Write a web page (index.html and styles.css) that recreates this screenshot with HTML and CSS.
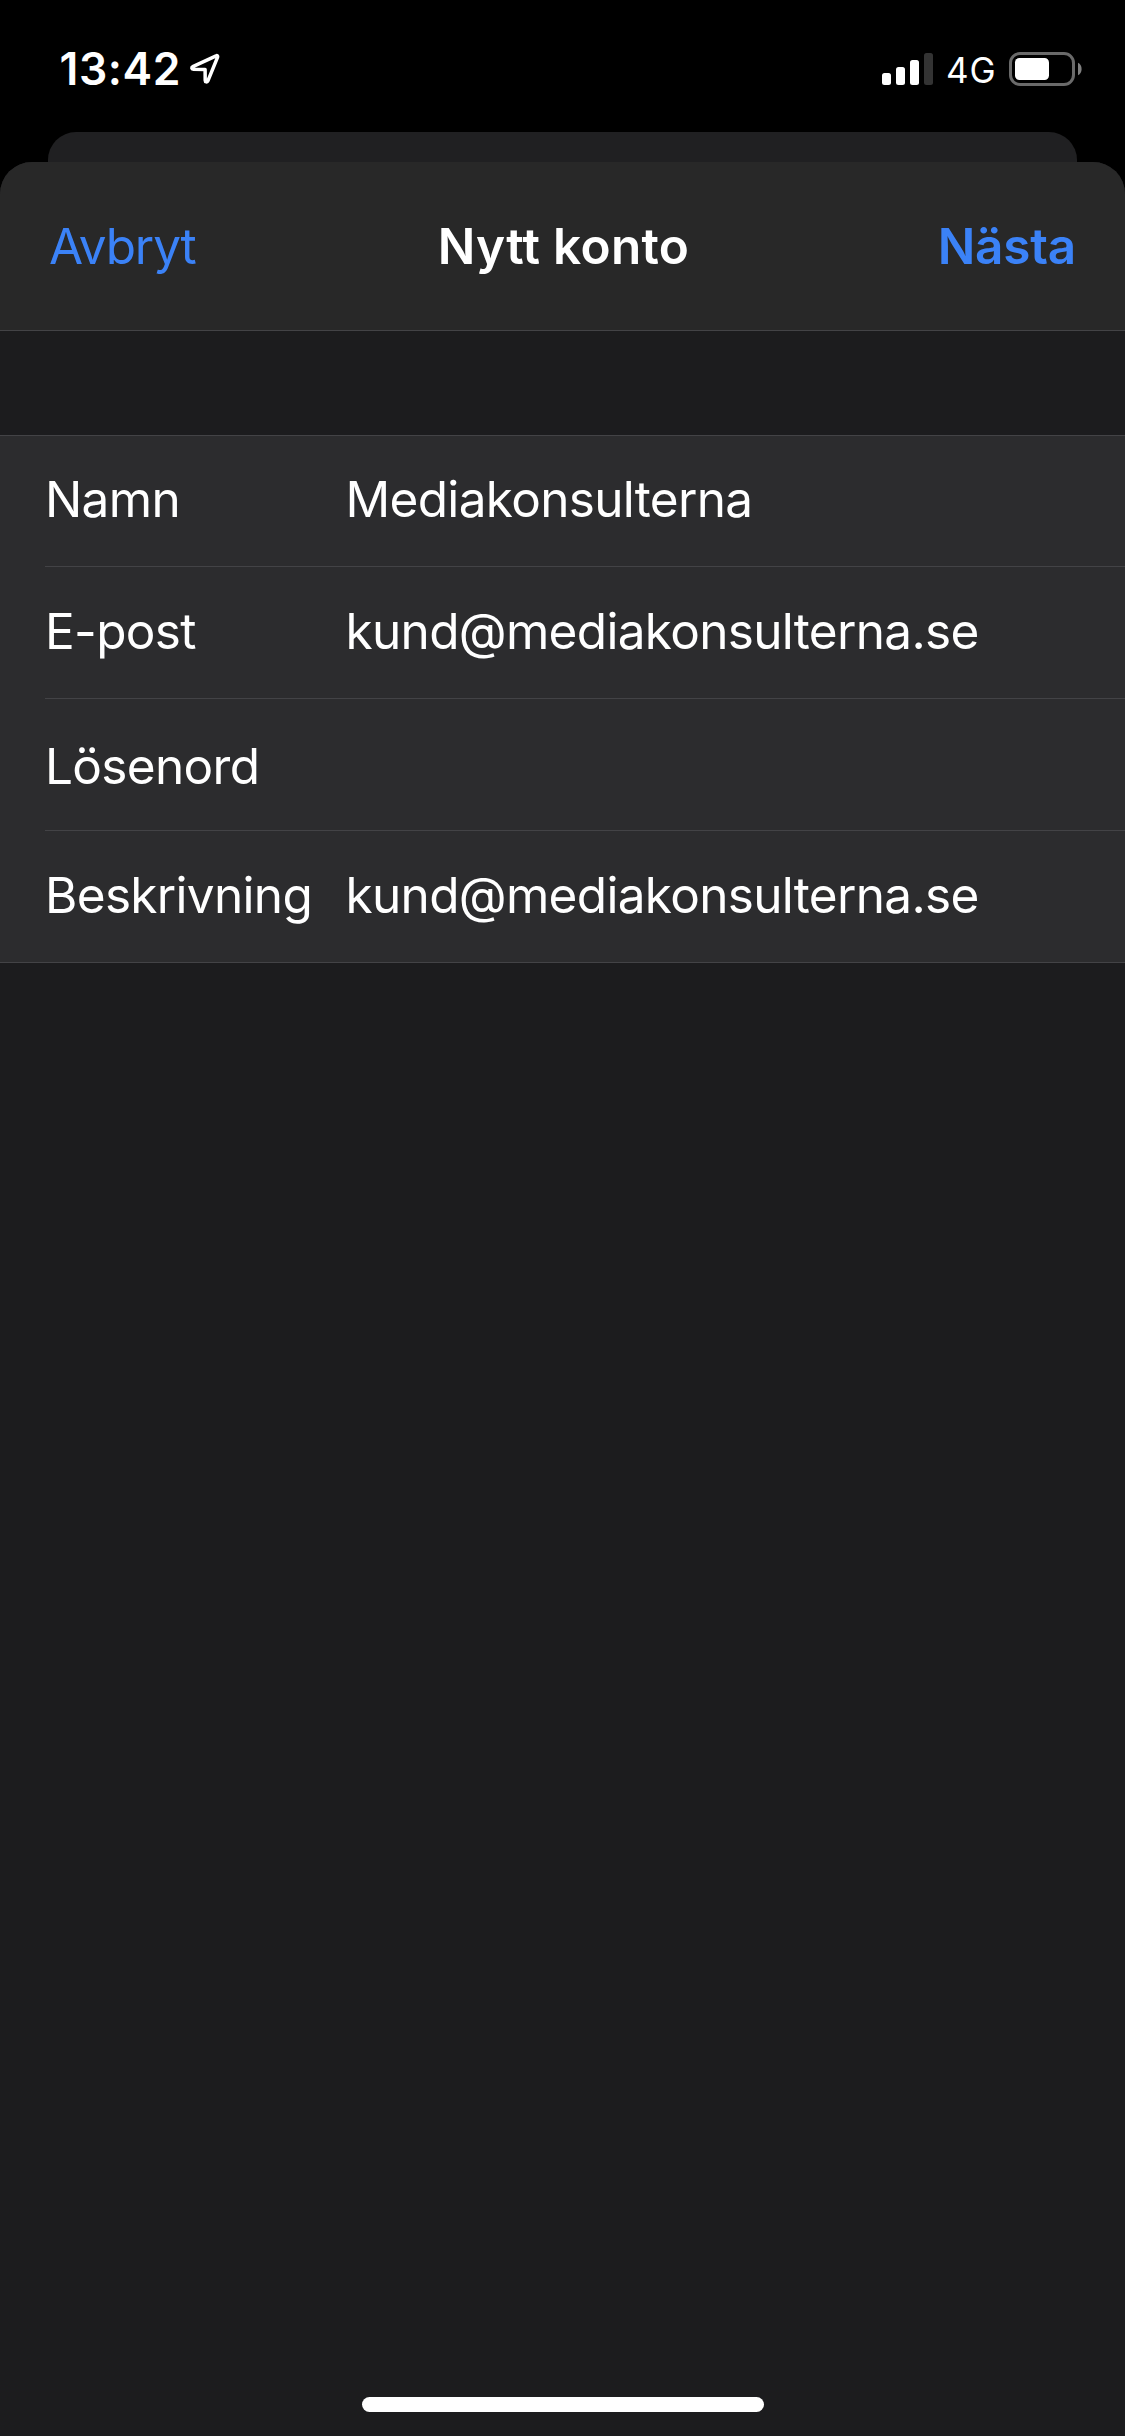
FILE: index.html
```
<!DOCTYPE html>
<html lang="sv">
<head>
    <meta charset="UTF-8">
    <meta name="viewport" content="width=device-width, initial-scale=1.0">
    <title>Nytt konto</title>
    <link rel="stylesheet" href="styles.css">
</head>
<body>
    <div class="status-bar">
        <div class="status-left">
            <span class="time">13:42</span>
            <svg class="location" width="34" height="34" viewBox="0 0 34 34">
                <path d="M29.8 5.3 C30.8 4.8 31.7 5.6 31.3 6.7 L21.6 30.4 C20.9 32 18.9 31.6 18.9 29.9 L18.8 19 L7.1 18.7 C5.2 18.6 5 16.9 6.5 16.2 Z" transform="translate(-1.7 -.5)" fill="none" stroke="#fff" stroke-width="3.5" stroke-linejoin="round"/>
            </svg>
        </div>
        <div class="status-right">
            <svg class="signal" width="51" height="32" viewBox="0 0 51 32">
                <rect x="0" y="20" width="9" height="12" rx="2.5" fill="#fff"/>
                <rect x="14" y="14" width="9" height="18" rx="2.5" fill="#fff"/>
                <rect x="28" y="7" width="9" height="25" rx="2.5" fill="#fff"/>
                <rect x="42" y="0" width="9" height="32" rx="2.5" fill="#333"/>
            </svg>
            <span class="network">4G</span>
            <svg class="battery" width="73" height="34" viewBox="0 0 73 34">
                <rect x="1.5" y="1.5" width="63" height="31" rx="9.5" fill="none" stroke="#6a6a6a" stroke-width="3"/>
                <rect x="6" y="6" width="34" height="22" rx="4.5" fill="#fff"/>
                <path d="M69 10.7 C73.8 12.7 73.8 21.3 69 23.3 Z" fill="#808080"/>
            </svg>
        </div>
    </div>

    <div class="back-sheet"></div>

    <div class="sheet">
        <div class="nav">
            <a class="cancel">Avbryt</a>
            <h1>Nytt konto</h1>
            <a class="next">Nästa</a>
        </div>

        <div class="form">
            <div class="row">
                <div class="label">Namn</div>
                <div class="value">Mediakonsulterna</div>
            </div>
            <div class="row">
                <div class="label">E-post</div>
                <div class="value email">kund@mediakonsulterna.se</div>
            </div>
            <div class="row password">
                <div class="label">Lösenord</div>
                <div class="value"></div>
            </div>
            <div class="row">
                <div class="label">Beskrivning</div>
                <div class="value email">kund@mediakonsulterna.se</div>
            </div>
        </div>

        <div class="home-indicator"></div>
    </div>
</body>
</html>
```
FILE: styles.css
```
* {
    box-sizing: border-box;
}
body {
    margin: 0;
    width: 1125px;
    height: 2436px;
    display: flex;
    flex-direction: column;
    overflow: hidden;
    background: #000;
    color: #fff;
    font-family: Inter, "Liberation Sans", sans-serif;
    font-size: 49.5px;
}
.status-bar {
    height: 132px;
    display: flex;
    justify-content: space-between;
    align-items: flex-start;
    padding: 49px 43px 0 59.5px;
}
.status-left,
.status-right {
    display: flex;
    align-items: flex-start;
}
.time {
    font-size: 44.5px;
    font-weight: 600;
    line-height: 40px;
    letter-spacing: 0.6px;
}
.location {
    margin-left: 7px;
    margin-top: 2px;
}
.signal {
    margin-top: 4px;
}
.network {
    font-size: 35px;
    line-height: 42px;
    letter-spacing: 0.8px;
    margin-left: 13px;
    width: 63px;
}
.battery {
    margin-top: 3px;
}
.back-sheet {
    height: 30px;
    flex-shrink: 0;
    margin: 0 48px;
    background: #202022;
    border-radius: 28px 28px 0 0;
}
.sheet {
    flex: 1;
    display: flex;
    flex-direction: column;
    background: #1c1c1e;
    border-radius: 32px 32px 0 0;
    overflow: hidden;
}
.nav {
    height: 169px;
    display: grid;
    grid-template-columns: 1fr auto 1fr;
    align-items: start;
    padding: 0 49px;
    line-height: 168px;
    background: #282828;
    border-bottom: 1px solid #434346;
}
.nav h1 {
    margin: 0;
    padding-left: 2px;
    font-size: 49.5px;
    font-weight: 600;
    letter-spacing: 0.3px;
}
.cancel,
.next {
    color: #3b82f7;
}
.cancel {
    letter-spacing: -1.1px;
}
.next {
    font-weight: 600;
    letter-spacing: -0.2px;
    text-align: right;
}
.form {
    margin-top: 104px;
    background: #2c2c2e;
    border-top: 1px solid #434346;
    border-bottom: 1px solid #434346;
}
.row {
    height: 132px;
    display: flex;
    align-items: center;
    margin-left: 45px;
    padding-bottom: 3px;
    border-bottom: 1px solid #434346;
    letter-spacing: -0.68px;
}
.row:first-child {
    height: 131px;
    padding-bottom: 4px;
}
.row:last-child {
    height: 131px;
    border-bottom: none;
}
.row.password {
    padding-top: 3px;
    padding-bottom: 0;
}
.label {
    width: 300.5px;
}
.home-indicator {
    width: 402px;
    height: 15px;
    margin: auto auto 24px;
    border-radius: 8px;
    background: #fff;
}
```
